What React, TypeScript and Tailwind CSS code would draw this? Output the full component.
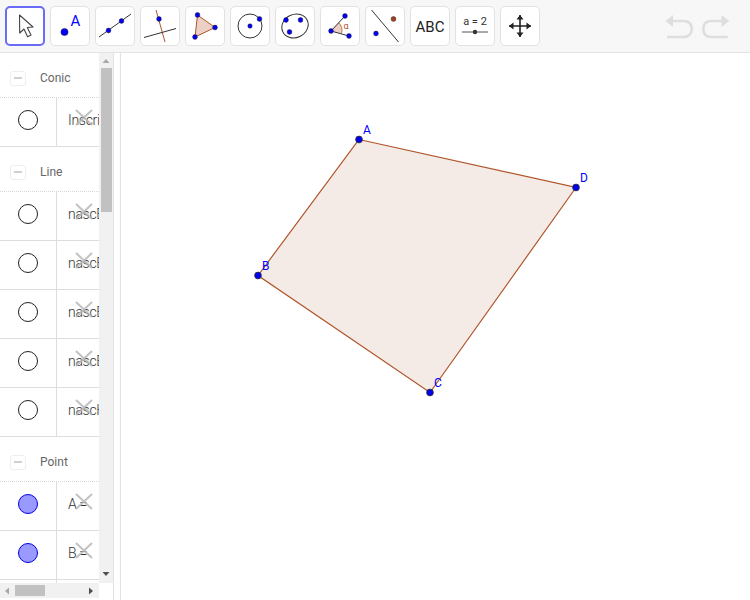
const GRAY = "#333";
const BROWN = "#b0552a";

function Pt({ x, y, r = 3.2, fill = "#0000ff" }: { x: number; y: number; r?: number; fill?: string }) {
  return <circle cx={x} cy={y} r={r} fill={fill} stroke="#222" strokeWidth={0.5} />;
}

function Tool({ active, children }: { active?: boolean; children: React.ReactNode }) {
  return (
    <div
      className={
        active
          ? "w-10 h-10 shrink-0 rounded-[5px] border-2 border-[#6a6cf5] bg-white"
          : "w-10 h-10 shrink-0 rounded-[5px] border border-[#e2e2e2] bg-white"
      }
    >
      {children}
    </div>
  );
}

function Ico({ children, active }: { children: React.ReactNode; active?: boolean }) {
  return (
    <svg
      width="40"
      height="40"
      viewBox="0 0 40 40"
      className={active ? "block -m-[2px]" : "block -m-px"}
      fontFamily="Roboto, sans-serif"
    >
      {children}
    </svg>
  );
}

function Toolbar() {
  return (
    <div className="h-[53px] shrink-0 flex items-start pt-[6px] pl-[5px] gap-[5px] bg-[#f7f7f7] border-b border-[#e3e3e3] relative">
      <Tool active>
        <Ico active>
          <path d="M14.5 9 L14.7 27 L19 23 L22.6 30.8 L26 29 L22.3 21.5 L28 21 Z" fill="#fff" stroke="#444" strokeWidth="1.1" strokeLinejoin="round" />
        </Ico>
      </Tool>
      <Tool>
        <Ico>
          <Pt x={14.5} y={26} r={3.6} />
          <text x={20.5} y={20} fontSize="15" fill="#0000ff">A</text>
        </Ico>
      </Tool>
      <Tool>
        <Ico>
          <line x1="4" y1="31" x2="36" y2="8" stroke={GRAY} strokeWidth="1" />
          <Pt x={13.5} y={24.5} r={2.4} />
          <Pt x={26.5} y={15} r={2.4} />
        </Ico>
      </Tool>
      <Tool>
        <Ico>
          <line x1="16" y1="4" x2="25" y2="36" stroke={BROWN} strokeWidth="1" />
          <line x1="4" y1="31.5" x2="36" y2="22.5" stroke={GRAY} strokeWidth="1" />
          <Pt x={19} y={13} r={2.4} />
        </Ico>
      </Tool>
      <Tool>
        <Ico>
          <polygon points="12.5,9 30,21.5 10,31" fill="#eccfc5" stroke={BROWN} strokeWidth="1" />
          <Pt x={12.5} y={9} r={2.4} />
          <Pt x={30} y={21.5} r={2.4} />
          <Pt x={10} y={31} r={2.4} />
        </Ico>
      </Tool>
      <Tool>
        <Ico>
          <circle cx="20" cy="20" r="12" fill="none" stroke={GRAY} strokeWidth="1" />
          <Pt x={20} y={20} r={2.2} />
          <Pt x={29.5} y={13} r={2.4} />
        </Ico>
      </Tool>
      <Tool>
        <Ico>
          <ellipse cx="20" cy="20" rx="13.5" ry="11.5" transform="rotate(-25 20 20)" fill="none" stroke={GRAY} strokeWidth="1" />
          <Pt x={11} y={14} r={2.4} />
          <Pt x={25.5} y={14} r={2.4} />
          <Pt x={14.5} y={26} r={2.4} />
        </Ico>
      </Tool>
      <Tool>
        <Ico>
          <path d="M11 25 L18.5 16.5 A11 11 0 0 1 21.5 27.4 Z" fill="#eccfc5" stroke="none" />
          <line x1="11" y1="25" x2="25" y2="10" stroke={GRAY} strokeWidth="1" />
          <line x1="11" y1="25" x2="29" y2="30" stroke={GRAY} strokeWidth="1" />
          <path d="M18.5 16.5 A11 11 0 0 1 21.5 27.4" fill="none" stroke={BROWN} strokeWidth="0.8" />
          <text x={23.5} y={23} fontSize="9" fill={BROWN}>α</text>
          <Pt x={11} y={25} r={2.4} />
          <Pt x={25} y={10} r={2.4} />
          <Pt x={29} y={30} r={2.4} />
        </Ico>
      </Tool>
      <Tool>
        <Ico>
          <line x1="6.5" y1="4" x2="33.5" y2="36" stroke={GRAY} strokeWidth="1" />
          <Pt x={11} y={27.5} r={2.4} />
          <Pt x={28.5} y={13} r={2.4} fill="#a8401c" />
        </Ico>
      </Tool>
      <Tool>
        <Ico>
          <text x={20} y={25.5} textAnchor="middle" fontSize="15" fill="#222">ABC</text>
        </Ico>
      </Tool>
      <Tool>
        <Ico>
          <text x={20} y={19} textAnchor="middle" fontSize="11" fill="#333">a = 2</text>
          <line x1="7" y1="26" x2="33" y2="26" stroke="#555" strokeWidth="1" />
          <circle cx="20" cy="26" r="2.2" fill="#333" />
        </Ico>
      </Tool>
      <Tool>
        <Ico>
          <path d="M20 9 V31 M9 20 H31" stroke="#222" strokeWidth="1.6" />
          <path d="M20 9 L16.5 13.5 H23.5 Z M20 31 L16.5 26.5 H23.5 Z M9 20 L13.5 16.5 V23.5 Z M31 20 L26.5 16.5 V23.5 Z" fill="#222" />
        </Ico>
      </Tool>
      <div className="ml-auto mr-[20px] mt-[8px]">
        <svg width="66" height="26" viewBox="0 0 66 26" className="block">
          <path d="M7 7 H19 C25.5 7 27.7 10.5 27.7 15 C27.7 19 25 23 19 23 H3" fill="none" stroke="#dedede" strokeWidth="2.6" />
          <path d="M1.5 7 L9 1 V13 Z" fill="#dedede" />
          <path d="M58 7 H47.5 C41 7 39.3 10.5 39.3 15 C39.3 19 41 23 47.5 23 H63.7" fill="none" stroke="#dedede" strokeWidth="2.6" />
          <path d="M65.3 7 L57.5 1 V13 Z" fill="#dedede" />
        </svg>
      </div>
    </div>
  );
}

function Header({ label }: { label: string }) {
  return (
    <div className="h-[45px] shrink-0 flex items-center pl-[10px] pt-[6px] border-b border-dotted border-[#d8d8d8]">
      <div className="w-[16px] h-[15px] rounded-[3px] border border-[#eeeeee] flex items-center justify-center">
        <div className="w-[8px] h-[2px] bg-[#d0d0d0]" />
      </div>
      <span className="ml-[14px] text-[12px] text-[#666]">{label}</span>
    </div>
  );
}

function Row({ text, point }: { text: string; point?: boolean }) {
  return (
    <div className="h-[49px] shrink-0 flex border-b border-[#dddddd]">
      <div className="w-[57px] shrink-0 flex items-center justify-center pb-[4px] border-r border-[#dddddd]">
        <div
          className={
            point
              ? "w-5 h-5 rounded-full border border-[#0000e6] bg-[#9999ff]"
              : "w-5 h-5 rounded-full border border-[#222]"
          }
        />
      </div>
      <div className="relative flex-1 min-w-0 overflow-hidden pl-[11px] pb-[4px] flex items-center">
        <span className="text-[14px] font-light tracking-[-0.3px] text-[#333] whitespace-nowrap">{text}</span>
        <svg width="18" height="18" viewBox="0 0 18 18" className="absolute left-[18px] top-[11px]">
          <path d="M1 1 L17 16 M17 1 L1 16" stroke="#b8b8b8" strokeWidth="2" opacity="0.85" />
        </svg>
      </div>
    </div>
  );
}

function Sidebar() {
  return (
    <div className="w-[114px] shrink-0 flex flex-col pb-[2px] border-r border-[#e3e3e3]">
      <div className="flex-1 min-h-0 flex">
        <div className="w-[99px] shrink-0 flex flex-col overflow-hidden">
          <Header label="Conic" />
          <Row text="Inscri" />
          <Header label="Line" />
          <Row text="nascE" />
          <Row text="nascE" />
          <Row text="nascE" />
          <Row text="nascE" />
          <Row text="nascH" />
          <Header label="Point" />
          <Row text="A =" point />
          <Row text="B =" point />
          <Row text="C =" point />
        </div>
        <div className="w-[14px] shrink-0 bg-[#f1f1f1] flex flex-col items-center pt-[5px] pb-[6px]">
          <svg width="8" height="6" viewBox="0 0 8 6" className="block"><path d="M4 1 L7.5 5 H0.5 Z" fill="#a8a8a8" /></svg>
          <div className="w-[11px] h-[144px] mt-[4px] bg-[#c1c1c1]" />
          <svg width="8" height="6" viewBox="0 0 8 6" className="block mt-auto"><path d="M4 5 L7.5 1 H0.5 Z" fill="#505050" /></svg>
        </div>
      </div>
      <div className="h-[15px] shrink-0 flex">
        <div className="w-[99px] bg-[#f1f1f1] flex items-center pl-[4px] pr-[5px]">
          <svg width="6" height="8" viewBox="0 0 6 8" className="block"><path d="M1 4 L5 0.5 V7.5 Z" fill="#a8a8a8" /></svg>
          <div className="w-[30px] h-[11px] ml-[5px] bg-[#c1c1c1]" />
          <svg width="6" height="8" viewBox="0 0 6 8" className="block ml-auto"><path d="M5 4 L1 0.5 V7.5 Z" fill="#505050" /></svg>
        </div>
      </div>
    </div>
  );
}

function CanvasPt({ x, y }: { x: number; y: number }) {
  return <circle cx={x} cy={y} r={3.4} fill="#0000f0" stroke="#333" strokeWidth={0.8} />;
}

function Graphics() {
  return (
    <div className="flex-1 min-w-0 bg-white">
      <svg viewBox="121 53 629 547" className="block w-full h-full" fontFamily="Roboto, sans-serif">
        <polygon points="359,139.5 576,187.5 430,392.5 258,275.5" fill="#f4ebe6" stroke="#b0552a" strokeWidth="1.2" />
        <CanvasPt x={359} y={139.5} />
        <CanvasPt x={258} y={275.5} />
        <CanvasPt x={430} y={392.5} />
        <CanvasPt x={576} y={187.5} />
        <text x={363} y={133.5} fontSize="12" fill="#0000ff">A</text>
        <text x={262} y={270} fontSize="12" fill="#0000ff">B</text>
        <text x={434} y={387} fontSize="12" fill="#0000ff">C</text>
        <text x={580} y={182} fontSize="12" fill="#0000ff">D</text>
      </svg>
    </div>
  );
}

export default function App() {
  return (
    <div className="w-[750px] h-[600px] flex flex-col bg-white overflow-hidden font-['Roboto',sans-serif]">
      <Toolbar />
      <div className="flex-1 min-h-0 flex">
        <Sidebar />
        <div className="w-[7px] shrink-0 bg-white border-r border-[#e3e3e3]" />
        <Graphics />
      </div>
    </div>
  );
}
